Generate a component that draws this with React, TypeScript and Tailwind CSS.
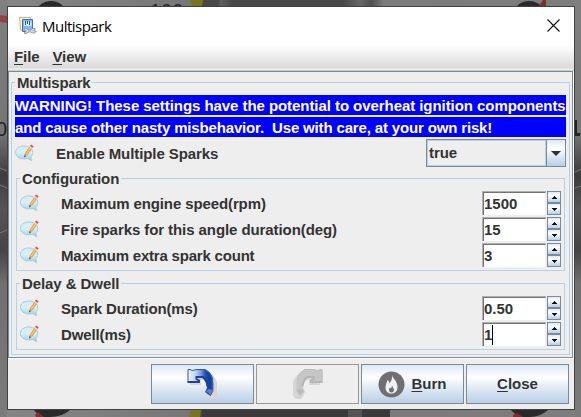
import React from "react";

const steel = "bg-[linear-gradient(to_bottom,#dde8f3_0%,#ffffff_32%,#e6eef6_55%,#b8cfe5_100%)]";

function Backdrop() {
  return (
    <svg className="absolute inset-0" width="581" height="417" viewBox="0 0 581 417">
      <defs>
        <linearGradient id="top" x1="0" x2="1">
          <stop offset="0" stopColor="#858585" />
          <stop offset="0.33" stopColor="#777" />
          <stop offset="0.345" stopColor="#484848" />
          <stop offset="0.375" stopColor="#484848" />
          <stop offset="0.38" stopColor="#606060" />
          <stop offset="0.4" stopColor="#484848" />
          <stop offset="0.59" stopColor="#484848" />
          <stop offset="0.62" stopColor="#666" />
          <stop offset="0.64" stopColor="#505050" />
          <stop offset="0.66" stopColor="#7b7b7b" />
          <stop offset="1" stopColor="#7d7d7d" />
        </linearGradient>
        <linearGradient id="side" x1="0" x2="0" y1="0" y2="1">
          <stop offset="0" stopColor="#808080" />
          <stop offset="0.32" stopColor="#757575" />
          <stop offset="0.42" stopColor="#3c3c3c" />
          <stop offset="0.5" stopColor="#555" />
          <stop offset="0.6" stopColor="#454545" />
          <stop offset="0.68" stopColor="#707070" />
          <stop offset="1" stopColor="#7b7b7b" />
        </linearGradient>
      </defs>
      <rect width="581" height="417" fill="url(#top)" />
      <rect width="7" height="417" fill="url(#side)" />
      <rect x="575" width="6" height="417" fill="url(#side)" />
      <rect x="202" y="409" width="188" height="8" fill="#3a3a3a" />
      <rect x="348" y="409" width="14" height="8" fill="#555" />
      <path d="M0 15L7 16V23L0 22Z" fill="#8e4444" />
      <circle cx="51" cy="18" r="17" fill="#2a2a2a" />
      <circle cx="529" cy="18" r="17" fill="#2a2a2a" />
      <path d="M539 6L543 0H546V6Z" fill="#7c2d33" />
      <path d="M190 0H203L202 6H192Z" fill="#77751f" />
      <path d="M191 410H201L200 417H189Z" fill="#77751f" />
      <path d="M34 410H70Q62 417 50 417H40Z" fill="#292929" />
      <path d="M35 415L38 412L44 417H36Z" fill="#812c35" />
      <path d="M511 410H548Q540 417 530 417H518Z" fill="#292929" />
      <path d="M513 415L517 413L523 417H513Z" fill="#812c35" />
      <text x="150" y="18" fontFamily="Liberation Sans" fontSize="20" fontWeight="400" fill="#262626">100</text>
      <text x="-4" y="136" fontFamily="Liberation Sans" fontSize="20" fontWeight="400" fill="#222">0</text>
      <path d="M575 120H577V133H580V136H575Z" fill="#222" />
      <path d="M0 168L7 171M0 185L7 188M0 233L7 230M575 172L581 169M575 188L581 186" stroke="#777" />
    </svg>
  );
}

function NoteIcon() {
  return (
    <svg width="19" height="18" viewBox="0 0 19 18" className="-mr-px shrink-0">
      <defs>
        <linearGradient id="bubble" x1="0" x2="0" y1="0" y2="1">
          <stop offset="0" stopColor="#d9ebf4" />
          <stop offset="0.45" stopColor="#d6f0fa" />
          <stop offset="1" stopColor="#8fd5ee" />
        </linearGradient>
      </defs>
      <path d="M8.500 2C4 2 .5 4.500 .5 8.300S4 14.800 8.500 14.800C10.500 14.800 12 14.700 13 14.400L16.500 16.800L15.800 12.900C17.200 11.500 17.700 10 17.700 8.300C17.700 4.500 13.500 2 8.500 2Z" fill="url(#bubble)" stroke="#a0c6d6" strokeWidth="0.9" />
      <path d="M9.300 12.500L10 9.300L14.200 3L17 4.800L12.700 11Z" fill="#efa043" />
      <path d="M11.300 10L15.500 3.900" stroke="#ffd694" strokeWidth="1" />
      <path d="M9 13.500L9.500 11.100L11.200 12.200Z" fill="#5b5148" />
      <path d="M14.200 3L15.100 1.700L17.800 3.500L17 4.800Z" fill="#d9dde6" />
      <path d="M15 1.900L16 .5L18.600 2.300L17.700 3.700Z" fill="#dc4459" />
    </svg>
  );
}

function AppIcon() {
  return (
    <svg width="18" height="18" viewBox="0 0 18 18" className="shrink-0">
      <path d="M.5.5H11.500V13H1.500Z" fill="#fff3cf" stroke="#d8b76a" />
      <path d="M3.500 2.500H13.500V14.500H3.500Z" fill="#80b9ee" stroke="#3474bd" />
      <path d="M5 4.500H12.500V9H5Z" fill="#d9edff" />
      <path d="M6.500 4V8M8.500 4V7M10.500 4V8" stroke="#1d58a8" />
      <path d="M5 12C7 10 8 12 9 13H12C13 11 15 11 16.500 12L14.500 13.500L17.500 14.500C15 17 13 16 12 15H9C8 17 6 17 5 16L7 14.500Z" fill="#d4d8dd" stroke="#858c98" strokeWidth=".8" />
    </svg>
  );
}

function Arrow({ muted = false }: { muted?: boolean }) {
  const flip = muted ? "-scale-x-100" : "";
  return (
    <svg width="31" height="32" viewBox="0 0 31 32" className={flip}>
      <defs>
        <linearGradient id="undo" x1="0" x2="1">
          <stop offset="0" stopColor="#f4f8ff" />
          <stop offset="0.3" stopColor="#c3d3f0" />
          <stop offset="0.5" stopColor="#7f9fdb" />
          <stop offset="0.7" stopColor="#1f4cab" />
          <stop offset="0.88" stopColor="#113c9e" />
          <stop offset="1" stopColor="#3f68bd" />
        </linearGradient>
      </defs>
      <path d="M3 3H21L27 8L30 14V28L27 31H22L19 27L21 22Q20 15 16 12H14V17H3Z" fill={muted ? "#d6d6d6" : "#ddd5cd"} />
      <path d="M.5 1.500H3L5 2.500L10 1.500H18Q25.500 5 26.500 15V23L23.500 28L18 24L20 20Q19 12 15 10H10L12.500 12V15H.5Z" fill={muted ? "#c6c6c6" : "url(#undo)"} />
      <path d="M.5 14H12V12.500L9.500 11V9H16Q20 12 20.500 18" fill="none" stroke={muted ? "#b4b4b4" : "#1a429f"} strokeWidth="2" />
      <path d="M1 14V1.500H3L5 2.500L10 1.500H18Q24 4 26 12" fill="none" stroke={muted ? "#bdbdbd" : "#2d57ae"} />
      <path d="M19 23L22 21L26 22L23.500 27Z" fill={muted ? "#bbb" : "#5b80c8"} />
    </svg>
  );
}

function Field({ value, caret = false }: { value: string; caret?: boolean }) {
  return (
    <div className="flex h-6 w-[79px] shrink-0 justify-between">
      <div className="flex h-6 w-16 border-t border-l border-[#b0b0b0]">
        <div className="flex h-[23px] w-[63px] border-t border-r border-l border-t-[#737373] border-r-[#eee] border-l-[#737373] bg-white leading-[22px]">
          {value}
          {caret && <span className="mt-px h-5 w-px bg-black" />}
        </div>
      </div>
      <div className="flex w-[14px] flex-col">
        <div className={`flex h-3 items-center justify-center border border-[#7a8a99] ${steel}`}>
          <svg width="5" height="3"><path d="M2 0h1v1h1v1h1v1H0V2h1V1h1z" fill="#111" /></svg>
        </div>
        <div className={`flex h-3 items-center justify-center border border-[#7a8a99] ${steel}`}>
          <svg width="5" height="3"><path d="M0 0h5v1H4v1H3v1H2V2H1V1H0z" fill="#111" /></svg>
        </div>
      </div>
    </div>
  );
}

function Row({ label, value, caret, spacing }: { label: string; value: string; caret?: boolean; spacing: string }) {
  return (
    <div className="flex h-6 items-center pr-[3px] pl-[3px]">
      <NoteIcon />
      <span className={`ml-[23px] flex-1 pt-px leading-6 ${spacing}`}>{label}</span>
      <Field value={value} caret={caret} />
    </div>
  );
}

function Group({ title, className, children }: { title: string; className: string; children: React.ReactNode }) {
  return (
    <div className={`mr-[4px] ml-1 border border-[#b8cfe5] ${className}`}>
      <div className="-mt-[9px] ml-[3px] w-fit bg-[#eee] px-[2px] leading-[18px] tracking-[-0.08px]">{title}</div>
      <div className="mt-[3px] flex flex-col gap-[2px]">{children}</div>
    </div>
  );
}

const button = "flex h-10 w-[103px] items-center justify-center border";

export default function App() {
  return (
    <div className="relative h-[417px] w-[581px] overflow-hidden pt-[6px] pl-[7px] font-['Liberation_Sans',sans-serif] text-[15px] font-bold whitespace-pre text-[#333]">
      <Backdrop />
      <div className="relative flex h-[404px] w-[568px] flex-col border border-[#414141] bg-[#eee]">
        <div className="flex h-[38px] items-center bg-white pl-[11px]">
          <AppIcon />
          <span className="ml-[5px] font-['Open_Sans',sans-serif] text-[15px] font-normal tracking-[-0.5px] text-black">Multispark</span>
          <svg width="13" height="13" viewBox="0 0 13 13" className="-mt-[2px] mr-[14px] ml-auto">
            <path d="M.5.5L12.500 12.500M12.500.5L.5 12.500" stroke="#111" strokeWidth="1.100" />
          </svg>
        </div>
        <div className="flex h-[26px] gap-[13px] border-b border-[#ccc] bg-[linear-gradient(#fff,#dadada_23px,#eee_24px)] pl-[6px] leading-[24px] tracking-[-0.1px]">
          <span><u className="underline-offset-2">F</u>ile</span>
          <span><u className="underline-offset-2">V</u>iew</span>
        </div>
        <div className="h-[288px] border-r border-b border-white">
          <div className="h-[287px] border border-[#7a8a99] px-[2px] pt-[10px]">
            <div className="h-[273px] w-[559px] border border-[#b8cfe5]">
              <div className="-mt-[9px] ml-[3px] w-fit bg-[#eee] px-[2px] leading-[18px] tracking-[-0.15px]">Multispark</div>
              <div className="mt-[3px] ml-[3px] flex w-[551px] flex-col gap-[2px] text-white">
                <div className="h-5 bg-[#00f] leading-[22px] tracking-[-0.06px]">WARNING! These settings have the potential to overheat ignition components</div>
                <div className="h-5 bg-[#00f] leading-[22px] tracking-[-0.155px]">and cause other nasty misbehavior.  Use with care, at your own risk!</div>
              </div>
              <div className="mt-[2px] flex h-7 items-center pr-[2px] pl-[3px]">
                <NoteIcon />
                <span className="ml-[23px] flex-1 pt-[3px] tracking-[-0.09px]">Enable Multiple Sparks</span>
                <div className="mr-px flex h-7 w-[140px] border border-[#7a8a99]">
                  <div className="flex-1 border border-[#b8cfe5] pl-px leading-6 tracking-[-0.1px]">true</div>
                  <div className={`flex w-[19px] items-center justify-center border-l border-[#7a8a99] ${steel}`}>
                    <svg width="10" height="5"><path d="M0 0h10L5 5z" fill="#333" /></svg>
                  </div>
                </div>
              </div>
              <Group title="Configuration" className="mt-[11px] h-[93px]">
                <Row label="Maximum engine speed(rpm)" value="1500" spacing="tracking-[-0.11px]" />
                <Row label="Fire sparks for this angle duration(deg)" value="15" spacing="tracking-[-0.08px]" />
                <Row label="Maximum extra spark count" value="3" spacing="tracking-[-0.2px]" />
              </Group>
              <Group title="Delay & Dwell" className="mt-[12px] h-[67px]">
                <Row label="Spark Duration(ms)" value="0.50" spacing="tracking-[-0.15px]" />
                <Row label="Dwell(ms)" value="1" caret spacing="tracking-[-0.12px]" />
              </Group>
            </div>
          </div>
        </div>
        <div className="flex justify-end gap-[2px] pt-[5px] pr-[5px]">
          <div className={`${button} border-[#7a8a99] ${steel}`}><Arrow /></div>
          <div className={`${button} border-[#999]`}><Arrow muted /></div>
          <div className={`${button} border-[#7a8a99] ${steel}`}>
            <svg width="27" height="27" viewBox="0 0 27 27" className="mr-[6px]">
              <circle cx="13.500" cy="13.500" r="13" fill="#707070" />
              <path d="M14 4C15 8 19.500 10 19.500 16C19.500 20 17 22.500 13.500 22.500C9.500 22.500 7.500 20 7.500 16.500C7.500 13 9 11.500 9.500 9C11 10 11.500 11.500 11.500 12.500C13.500 10 14.500 7 14 4Z" fill="#f2f2f2" />
              <path d="M14 14C14 16 16 17 16 19C16 20.500 15 21.500 13.500 21.500C12 21.500 11 20.500 11 19C11 18 11.500 17 12 16.500L12.700 17.500C13.500 16.500 14 15.500 14 14Z" fill="#707070" />
            </svg>
            <span><u className="underline-offset-2">B</u>urn</span>
          </div>
          <div className={`${button} border-[#7a8a99] ${steel}`}><span><u className="underline-offset-2">C</u>lose</span></div>
        </div>
      </div>
    </div>
  );
}
